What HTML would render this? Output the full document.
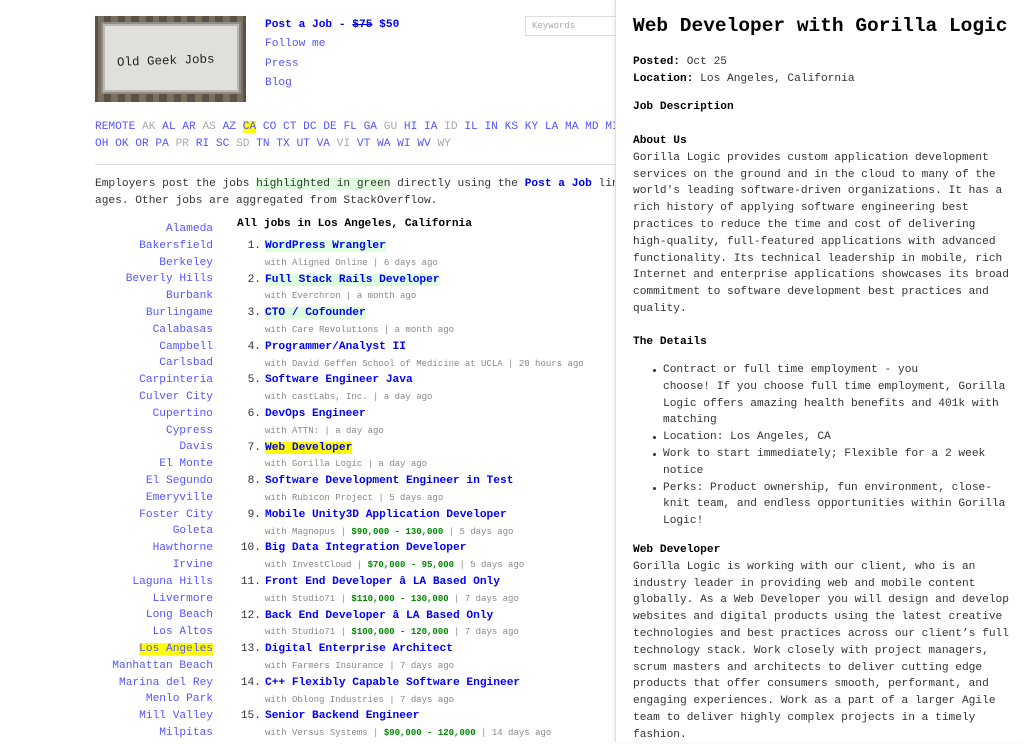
<!DOCTYPE html>
<html><head><meta charset="utf-8"><style>
*{margin:0;padding:0;box-sizing:border-box}
body{width:1024px;height:742px;overflow:hidden;background:#fff;font-family:"Liberation Mono",monospace;font-size:11.2px;color:#333;position:relative}
a{text-decoration:none}
.abs{position:absolute;white-space:nowrap}
.nav a{color:#55f}
.st{color:#55f}.st i{font-style:normal;color:#aaa}
.cities{position:absolute;left:95px;top:221px;width:118px;text-align:right;line-height:16.8px}
.cities div{color:#55f}
.jobs{position:absolute;left:236px;top:238px;width:400px;line-height:16.8px}
.job .t{white-space:nowrap}
.job .n{display:inline-block;width:25px;text-align:right;margin-right:4px;color:#333}
.job b a{color:#00f}
.job .g{background:#dfd}
.job .s{padding-left:29px;font-size:9px;color:#888;white-space:nowrap}
.job .s b{color:#080}
#panel{position:absolute;left:615px;top:0;width:409px;height:742px;background:#fff;border-left:1px solid #ddd;box-shadow:-2px 0 4px rgba(0,0,0,.06)}
#panel .l{position:absolute;left:17px;white-space:nowrap;line-height:16.8px}
#panel ul{list-style:none}
#panel li{position:relative}
#panel li:before{content:"";position:absolute;left:-10px;top:7px;width:3px;height:3px;border-radius:50%;background:#333}
</style></head><body>
<svg class="abs" style="left:95px;top:16px" width="151" height="86" viewBox="0 0 151 86">
<rect width="151" height="86" fill="#5a5246"/>
<g fill="#7a6e5e"><rect x="3" y="0" width="6" height="86"/><rect x="16" y="0" width="7" height="86"/><rect x="30" y="0" width="6" height="86"/><rect x="44" y="0" width="7" height="86"/><rect x="58" y="0" width="6" height="86"/><rect x="72" y="0" width="7" height="86"/><rect x="86" y="0" width="6" height="86"/><rect x="100" y="0" width="7" height="86"/><rect x="114" y="0" width="6" height="86"/><rect x="128" y="0" width="7" height="86"/><rect x="142" y="0" width="6" height="86"/></g>
<rect x="6" y="6" width="140" height="72" fill="#8f8c86"/>
<rect x="9" y="9" width="134" height="66" fill="#e0dfdb" stroke="#b9b7b1" stroke-width="2"/>
<text x="22" y="48" font-family="Liberation Mono,monospace" font-size="12.5" fill="#222" transform="rotate(-2 75 45)">Old Geek Jobs</text>
</svg>
<div class="abs nav" style="left:265px;top:16px;line-height:19.3px">
<div><b><a style="color:#00f">Post a Job - <s>$75</s> $50</a></b></div>
<div><a>Follow me</a></div><div><a>Press</a></div><div><a>Blog</a></div></div>
<div class="abs" style="left:525px;top:16px;width:100px;height:20px;border:1px solid #ddd;font-size:9px;color:#aaa;padding:4px 6px">Keywords</div>
<div class="abs st" style="left:95px;top:119px;line-height:17px">REMOTE <i>AK</i> AL AR <i>AS</i> AZ <span style="background:#ff0">CA</span> CO CT DC DE FL GA <i>GU</i> HI IA <i>ID</i> IL IN KS KY LA MA MD MI<br>OH OK OR PA <i>PR</i> RI SC <i>SD</i> TN TX UT VA <i>VI</i> VT WA WI WV <i>WY</i></div>
<div class="abs" style="left:95px;top:164px;width:530px;border-top:1px solid #ddd"></div>
<div class="abs" style="left:95px;top:176px;line-height:16.5px">Employers post the jobs <span style="background:#dfd">highlighted in green</span> directly using the <b style="color:#00f">Post a Job</b> link<br>ages. Other jobs are aggregated from StackOverflow.</div>
<div class="abs" style="left:237px;top:218px;font-weight:bold;color:#000">All jobs in Los Angeles, California</div>
<div class="cities">
<div>Alameda</div><div>Bakersfield</div><div>Berkeley</div><div>Beverly Hills</div><div>Burbank</div><div>Burlingame</div><div>Calabasas</div><div>Campbell</div><div>Carlsbad</div><div>Carpinteria</div><div>Culver City</div><div>Cupertino</div><div>Cypress</div><div>Davis</div><div>El Monte</div><div>El Segundo</div><div>Emeryville</div><div>Foster City</div><div>Goleta</div><div>Hawthorne</div><div>Irvine</div><div>Laguna Hills</div><div>Livermore</div><div>Long Beach</div><div>Los Altos</div><div><span style="background:#ff0">Los Angeles</span></div><div>Manhattan Beach</div><div>Marina del Rey</div><div>Menlo Park</div><div>Mill Valley</div><div>Milpitas</div></div>
<div class="jobs">
<div class="job"><div class="t"><span class="n">1.</span><b><a class="g">WordPress Wrangler</a></b></div><div class="s">with Aligned Online | 6 days ago</div></div>
<div class="job"><div class="t"><span class="n">2.</span><b><a class="g">Full Stack Rails Developer</a></b></div><div class="s">with Everchron | a month ago</div></div>
<div class="job"><div class="t"><span class="n">3.</span><b><a class="g">CTO / Cofounder</a></b></div><div class="s">with Care Revolutions | a month ago</div></div>
<div class="job"><div class="t"><span class="n">4.</span><b><a>Programmer/Analyst II</a></b></div><div class="s">with David Geffen School of Medicine at UCLA | 20 hours ago</div></div>
<div class="job"><div class="t"><span class="n">5.</span><b><a>Software Engineer Java</a></b></div><div class="s">with castLabs, Inc. | a day ago</div></div>
<div class="job"><div class="t"><span class="n">6.</span><b><a>DevOps Engineer</a></b></div><div class="s">with ATTN: | a day ago</div></div>
<div class="job"><div class="t"><span class="n">7.</span><b><a style="background:#ff0">Web Developer</a></b></div><div class="s">with Gorilla Logic | a day ago</div></div>
<div class="job"><div class="t"><span class="n">8.</span><b><a>Software Development Engineer in Test</a></b></div><div class="s">with Rubicon Project | 5 days ago</div></div>
<div class="job"><div class="t"><span class="n">9.</span><b><a>Mobile Unity3D Application Developer</a></b></div><div class="s">with Magnopus | <b>$90,000 - 130,000</b> | 5 days ago</div></div>
<div class="job"><div class="t"><span class="n">10.</span><b><a>Big Data Integration Developer</a></b></div><div class="s">with InvestCloud | <b>$70,000 - 95,000</b> | 5 days ago</div></div>
<div class="job"><div class="t"><span class="n">11.</span><b><a>Front End Developer â LA Based Only</a></b></div><div class="s">with Studio71 | <b>$110,000 - 130,000</b> | 7 days ago</div></div>
<div class="job"><div class="t"><span class="n">12.</span><b><a>Back End Developer â LA Based Only</a></b></div><div class="s">with Studio71 | <b>$100,000 - 120,000</b> | 7 days ago</div></div>
<div class="job"><div class="t"><span class="n">13.</span><b><a>Digital Enterprise Architect</a></b></div><div class="s">with Farmers Insurance | 7 days ago</div></div>
<div class="job"><div class="t"><span class="n">14.</span><b><a>C++ Flexibly Capable Software Engineer</a></b></div><div class="s">with Oblong Industries | 7 days ago</div></div>
<div class="job"><div class="t"><span class="n">15.</span><b><a>Senior Backend Engineer</a></b></div><div class="s">with Versus Systems | <b>$90,000 - 120,000</b> | 14 days ago</div></div>
</div>
<div id="panel">
<div class="l" style="top:13px;font-size:19.5px;font-weight:bold;color:#000;line-height:26px">Web Developer with Gorilla Logic</div>
<div class="l" style="top:54px"><b style="color:#000">Posted:</b> Oct 25<br><b style="color:#000">Location:</b> Los Angeles, California</div>
<div class="l" style="top:99px;font-weight:bold;color:#000">Job Description</div>
<div class="l" style="top:133px"><b style="color:#000">About Us</b><br>Gorilla Logic provides custom application development<br>services on the ground and in the cloud to many of the<br>world's leading software-driven organizations. It has a<br>rich history of applying software engineering best<br>practices to reduce the time and cost of delivering<br>high-quality, full-featured applications with advanced<br>functionality. Its technical leadership in mobile, rich<br>Internet and enterprise applications showcases its broad<br>commitment to software development best practices and<br>quality.</div>
<div class="l" style="top:334px;font-weight:bold;color:#000">The Details</div>
<ul class="l" style="top:362px;left:47px">
<li>Contract or full time employment - you<br>choose! If you choose full time employment, Gorilla<br>Logic offers amazing health benefits and 401k with<br>matching</li>
<li>Location: Los Angeles, CA</li>
<li>Work to start immediately; Flexible for a 2 week<br>notice</li>
<li>Perks: Product ownership, fun environment, close-<br>knit team, and endless opportunities within Gorilla<br>Logic!</li></ul>
<div class="l" style="top:542px"><b style="color:#000">Web Developer</b><br>Gorilla Logic is working with our client, who is an<br>industry leader in providing web and mobile content<br>globally. As a Web Developer you will design and develop<br>websites and digital products using the latest creative<br>technologies and best practices across our client’s full<br>technology stack. Work closely with project managers,<br>scrum masters and architects to deliver cutting edge<br>products that offer consumers smooth, performant, and<br>engaging experiences. Work as a part of a larger Agile<br>team to deliver highly complex projects in a timely<br>fashion.</div>
</div>
</body></html>
